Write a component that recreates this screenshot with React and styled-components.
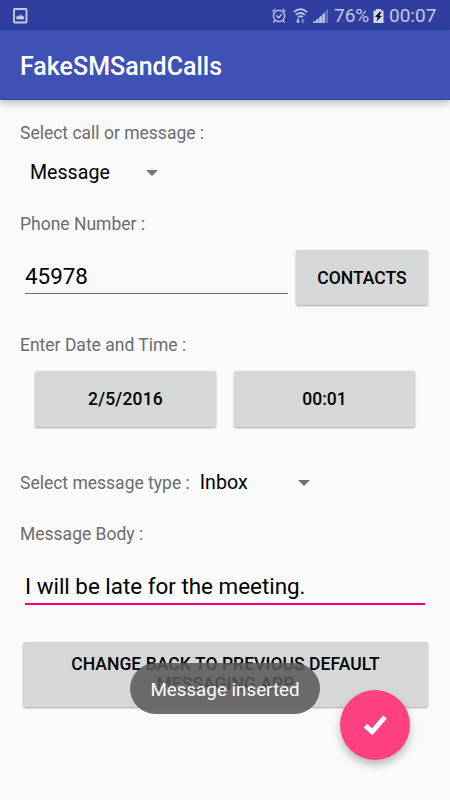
import React from 'react';
import styled, { createGlobalStyle } from 'styled-components';

const GlobalStyle = createGlobalStyle`
  * {
    box-sizing: border-box;
  }
  body {
    margin: 0;
    background-color: #fafafa;
    font-family: Roboto, sans-serif;
  }
`;

const Page = styled.div`
  position: relative;
  display: flex;
  flex-direction: column;
  width: 450px;
  height: 800px;
  overflow: hidden;
  background-color: #fafafa;
`;

const StatusBar = styled.div`
  display: flex;
  align-items: center;
  justify-content: space-between;
  height: 30px;
  padding: 2px 14px 0 13px;
  background-color: #303f9f;
  color: #c3c8e6;
`;

const StatusIcons = styled.div`
  display: flex;
  align-items: center;
  svg {
    display: block;
    flex: none;
  }
`;

const StatusText = styled.span`
  width: ${(props) => props.$width}px;
  margin: 0 ${(props) => props.$gap || 0}px 0 5px;
  font-size: 19px;
  line-height: 28px;
  white-space: nowrap;
`;

const AppBar = styled.header`
  display: flex;
  align-items: center;
  height: 70px;
  padding: 4px 20px 0;
  background-color: #3f51b5;
  border-bottom: 1px solid #2c3fa8;
  box-shadow: 0 3px 8px rgba(0, 0, 0, 0.26);
`;

const Title = styled.h1`
  margin: 0;
  color: #fff;
  font-size: 25px;
  font-weight: 500;
  line-height: 30px;
`;

const Form = styled.main`
  display: flex;
  flex-direction: column;
  padding: 21px 20px 0;
`;

const Label = styled.label`
  color: #6c6c6c;
  font-size: 17.5px;
  line-height: 24px;
  white-space: nowrap;
`;

const Row = styled.div`
  display: flex;
  align-items: ${(props) => props.$align || 'center'};
  gap: ${(props) => props.$gap || 0}px;
  height: ${(props) => props.$height}px;
  margin-top: ${(props) => props.$top || 0}px;
  margin-bottom: ${(props) => props.$bottom || 0}px;
  padding: 0 ${(props) => props.$right || 0}px 0 ${(props) => props.$left || 0}px;
`;

const Spinner = styled.div`
  display: flex;
  align-items: center;
  justify-content: space-between;
  width: ${(props) => props.$width}px;
  color: #000;
  font-size: 19.6px;
  line-height: ${(props) => props.$line || 30}px;
`;

const Caret = styled.span`
  border: 6.5px solid transparent;
  border-top-color: #737373;
  border-bottom: 0;
`;

const Field = styled.div`
  flex: none;
  width: ${(props) => props.$width}px;
  height: ${(props) => props.$height}px;
  border-bottom: ${(props) => (props.$focused ? '2px solid #f50072' : '1px solid #6e6e6e')};
  color: #000;
  font-size: 22.4px;
  line-height: ${(props) => props.$line}px;
  white-space: nowrap;
`;

const Button = styled.button`
  flex: none;
  width: ${(props) => props.$width}px;
  height: ${(props) => props.$height || 55}px;
  padding: ${(props) => (props.$wide ? '0 40px 1px' : '1px 0 0')};
  border: 0;
  border-radius: 2.5px;
  background-color: #d6d8d7;
  box-shadow: 0 1px 2px rgba(0, 0, 0, 0.34);
  color: #000;
  font-family: inherit;
  font-size: 17.5px;
  font-weight: 500;
  line-height: 20.5px;
  letter-spacing: ${(props) => props.$spacing || 0}px;
  text-transform: uppercase;
`;

const Toast = styled.div`
  position: absolute;
  left: 130px;
  top: 663px;
  width: 190px;
  height: 51px;
  border-radius: 26px;
  background-color: rgba(90, 90, 90, 0.87);
  color: #fff;
  font-size: 18.8px;
  line-height: 54px;
  text-align: center;
`;

const Fab = styled.button`
  position: absolute;
  left: 340px;
  top: 690px;
  width: 70px;
  height: 70px;
  padding: 0;
  border: 0;
  border-radius: 50%;
  background-color: #ff4081;
  box-shadow: 0 5px 9px rgba(0, 0, 0, 0.26);
  svg {
    display: block;
  }
`;

function PictureIcon() {
  return (
    <svg width="15" height="16" viewBox="0 0 15 16">
      <rect x="1" y="1" width="12.5" height="13.5" rx="0.7" fill="none" stroke="#c3c8e6" strokeWidth="1.9" />
      <path d="M3.3 11.3V9.1L5 7.6L6.2 8.4L7.6 6.3L8.8 8L9.7 7.6L11.2 9.4V11.3Z" fill="#c3c8e6" />
    </svg>
  );
}

function AlarmIcon() {
  return (
    <svg width="15" height="16" viewBox="0 0 15 16" fill="none" stroke="#c3c8e6" strokeWidth="1.3">
      <circle cx="7" cy="8" r="5.6" />
      <path d="M0.5 3.8L3.5 0.9M13.5 3.8L10.5 0.9M2.9 12.4L1.5 14.6M11.1 12.4L12.5 14.6M4.3 7.5L6.6 9.8L9.9 6.1" />
    </svg>
  );
}

function WifiIcon() {
  return (
    <svg width="15" height="16" viewBox="0 0 15 16" fill="none" stroke="#c3c8e6" strokeWidth="1.7">
      <path d="M0.8 4.1Q7.5 -1.9 14.2 4.1M3 6.8Q7.5 2.8 12 6.8M5.2 9.2Q7.5 7.2 9.8 9.2" />
      <path d="M5 15.3L7.1 12.9H5.8V10.2H4.2V12.9H2.9Z" fill="#c3c8e6" stroke="none" />
      <path d="M9.8 10.6L11.8 12.9H10.6V15.3H9V12.9H7.8Z" fill="#7e88c6" stroke="none" />
    </svg>
  );
}

function SignalIcon() {
  return (
    <svg width="16" height="16" viewBox="0 0 16 16" fill="#c3c8e6">
      <path d="M0 15V13.8L2.4 12.8V15ZM3 15V12L5.6 10.3V15ZM6.1 15V9.6L8.8 7.3V15ZM9.4 15V6.5L11.8 4.3V15Z" />
      <path d="M12.4 15V3L15 0.8V15Z" fill="#6873bb" />
    </svg>
  );
}

function BatteryIcon() {
  return (
    <svg width="11" height="16" viewBox="0 0 11 16">
      <path d="M0.5 2.5H3V1H8V2.5H10.5V15H0.5Z" fill="#d5d8ed" />
      <path d="M7 3.6L2 8.8L4.8 9.3L3.3 13.6L9 8L6.2 7.6L8.4 4.2Z" fill="#080c22" />
    </svg>
  );
}

function CheckIcon() {
  return (
    <svg width="70" height="70" viewBox="0 0 70 70">
      <path d="M25.5 35.6L32.1 41.8L45 27" fill="none" stroke="#fff" strokeWidth="4.9" />
    </svg>
  );
}

export default function App() {
  return (
    <Page>
      <GlobalStyle />
      <StatusBar>
        <PictureIcon />
        <StatusIcons>
          <AlarmIcon />
          <Row $left={6} $right={5}>
            <WifiIcon />
          </Row>
          <SignalIcon />
          <StatusText $width={35} $gap={4}>76%</StatusText>
          <BatteryIcon />
          <StatusText $width={47}>00:07</StatusText>
        </StatusIcons>
      </StatusBar>
      <AppBar>
        <Title>FakeSMSandCalls</Title>
      </AppBar>
      <Form>
        <Label>Select call or message :</Label>
        <Row $height={31} $top={12} $bottom={24} $left={10}>
          <Spinner $width={128} $line={31}>
            Message <Caret />
          </Spinner>
        </Row>
        <Label>Phone Number :</Label>
        <Row $height={56} $top={14} $bottom={27} $left={5} $gap={8} $align="flex-start">
          <Field $width={263} $height={44} $line={52}>
            45978
          </Field>
          <Button $width={132}>Contacts</Button>
        </Row>
        <Label>Enter Date and Time :</Label>
        <Row $height={56} $top={14} $bottom={41} $left={15} $gap={18}>
          <Button $width={181} $height={56} $spacing={0.2}>2/5/2016</Button>
          <Button $width={181} $height={56}>00:01</Button>
        </Row>
        <Row $height={30} $bottom={24} $gap={10}>
          <Label>Select message type :</Label>
          <Spinner $width={110}>
            Inbox <Caret />
          </Spinner>
        </Row>
        <Label>Message Body :</Label>
        <Row $height={36} $top={23} $bottom={37} $left={5}>
          <Field $width={400} $height={36} $line={34} $focused>
            I will be late for the meeting.
          </Field>
        </Row>
        <Row $height={65} $left={3}>
          <Button $width={405} $height={65} $wide $spacing={0.05}>
            Change back to previous default messaging app
          </Button>
        </Row>
      </Form>
      <Toast>Message inserted</Toast>
      <Fab>
        <CheckIcon />
      </Fab>
    </Page>
  );
}
